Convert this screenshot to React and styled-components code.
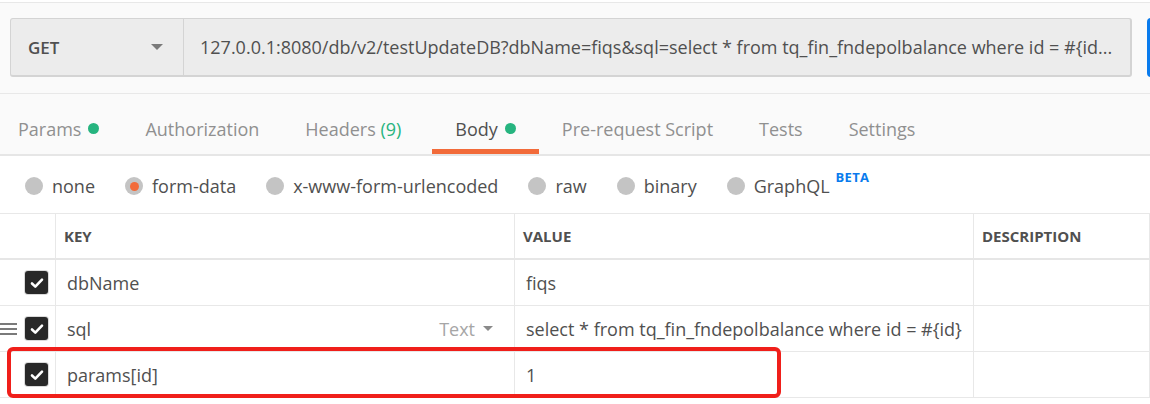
import React from "react";
import styled, { createGlobalStyle, css } from "styled-components";

const GlobalStyle = createGlobalStyle`
  html, body { margin: 0; padding: 0; background: #ffffff; }
  body { font-family: "Open Sans", "Noto Sans", sans-serif; color: #505050; }
  * { box-sizing: border-box; }
`;

const Page = styled.div`
  width: 1150px;
  height: 404px;
  overflow: hidden;
  background: #ffffff;
`;

const RequestSection = styled.div`
  display: flex;
  gap: 15px;
  margin-top: 2px;
  padding: 15px 0 16px 10px;
  background: #fafafa;
  border-top: 1px solid #e8e8e8;
  border-bottom: 1px solid #e8e8e8;
`;

const UrlBar = styled.div`
  flex: 0 0 1122px;
  height: 59px;
  display: flex;
  background: #ececec;
  border: solid #d4d4d4;
  border-width: 1px 2px 2px 1px;
  border-radius: 3px;
`;

const MethodSelect = styled.div`
  flex: 0 0 173px;
  display: flex;
  align-items: center;
  justify-content: space-between;
  padding: 0 20px 0 17px;
  border-right: 1px solid #d4d4d4;
  font-size: 17px;
  font-weight: 600;
  color: #505050;
`;

const Caret = styled.span`
  width: 0;
  height: 0;
  border-left: ${(p) => p.$size}px solid transparent;
  border-right: ${(p) => p.$size}px solid transparent;
  border-top: ${(p) => p.$size}px solid ${(p) => p.$color};
`;

const UrlText = styled.div`
  flex: 1;
  display: flex;
  align-items: center;
  padding-left: 16px;
  font-size: 18px;
  color: #505050;
  white-space: nowrap;
  overflow: hidden;
`;

const SendButton = styled.div`
  flex: 0 0 100px;
  height: 59px;
  background: #097bed;
  border-radius: 4px;
`;

const TabBar = styled.div`
  display: flex;
  padding-left: 18px;
  background: #fafafa;
  border-bottom: 2px solid #e6e6e6;
`;

const Tab = styled.div`
  display: flex;
  align-items: center;
  gap: 7px;
  height: 60px;
  padding: 14px 23px 0;
  margin-left: ${(p) => (p.$first ? "-23px" : "0")};
  font-size: 18px;
  color: ${(p) => (p.$active ? "#505050" : "#909090")};
  border-bottom: 5px solid ${(p) => (p.$active ? "#f26b3a" : "transparent")};
`;

const Dot = styled.span`
  width: 11px;
  height: 11px;
  border-radius: 50%;
  background: #26b47f;
`;

const Count = styled.span`
  margin-right: 8px;
  color: #26b47f;
`;

const BodyTypes = styled.div`
  display: flex;
  align-items: center;
  gap: 30px;
  height: 57px;
  padding: 3px 0 0 25px;
`;

const RadioItem = styled.label`
  display: flex;
  align-items: center;
  gap: 9px;
  font-size: 18px;
  color: #505050;
`;

const Radio = styled.span`
  width: 18px;
  height: 18px;
  border-radius: 50%;
  background: #c4c4c4;
  display: flex;
  align-items: center;
  justify-content: center;
  ${(p) =>
    p.$checked &&
    css`
      &::after {
        content: "";
        width: 9px;
        height: 9px;
        border-radius: 50%;
        background: #f26b3a;
      }
    `}
`;

const Beta = styled.sup`
  align-self: flex-start;
  margin: -6px 0 0 -3px;
  font-size: 13px;
  font-weight: 700;
  color: #097bed;
  letter-spacing: 0.3px;
`;

const TableWrap = styled.div`
  position: relative;
`;

const ParamTable = styled.div`
  display: grid;
  grid-template-columns: 56px 459px 459px 1fr;
  border-top: 1px solid #e8e8e8;
`;

const HeadCell = styled.div`
  height: 46px;
  display: flex;
  align-items: center;
  padding-left: 8px;
  font-size: 15px;
  font-weight: 700;
  color: #505050;
  border-right: 1px solid #e8e8e8;
  border-bottom: 2px solid #e6e6e6;
`;

const Cell = styled.div`
  height: 46px;
  display: flex;
  align-items: center;
  padding: 0 21px 0 11px;
  font-size: 18px;
  color: #505050;
  white-space: nowrap;
  border-right: 1px solid #e8e8e8;
  border-bottom: 1px solid #e8e8e8;
`;

const CheckCell = styled(Cell)`
  justify-content: flex-end;
  padding: 0 7px 0 0;
`;

const DragHandle = styled.span`
  margin-right: auto;
  width: 17px;
  height: 12px;
  display: flex;
  flex-direction: column;
  justify-content: space-between;
  & > i {
    display: block;
    height: 2px;
    background: #7a7a7a;
  }
`;

const CheckBox = styled.span`
  width: 23px;
  height: 23px;
  border-radius: 3px;
  background: #282828;
  box-shadow: 0 0 0 1px #dadada;
  display: flex;
  align-items: center;
  justify-content: center;
`;

const TypeSelect = styled.span`
  margin-left: auto;
  display: flex;
  align-items: center;
  gap: 8px;
  color: #a6a6a6;
`;

const Highlight = styled.div`
  position: absolute;
  left: 7px;
  top: 134px;
  width: 774px;
  height: 51px;
  border: 4px solid #f01f1a;
  border-radius: 6px;
  pointer-events: none;
`;

const Check = () => (
  <CheckBox>
    <svg width="16" height="16" viewBox="0 0 16 16">
      <path d="M3 8.5 L6.3 11.6 L13 4.6" fill="none" stroke="#fff" strokeWidth="2.6" strokeLinecap="round" strokeLinejoin="round" />
    </svg>
  </CheckBox>
);

const tabs = [
  { label: "Params", dot: true },
  { label: "Authorization" },
  { label: "Headers", count: "(9)" },
  { label: "Body", dot: true, active: true },
  { label: "Pre-request Script" },
  { label: "Tests" },
  { label: "Settings" },
];

const bodyTypes = [
  { label: "none" },
  { label: "form-data", checked: true },
  { label: "x-www-form-urlencoded" },
  { label: "raw" },
  { label: "binary" },
  { label: "GraphQL", beta: true },
];

const rows = [
  { key: "dbName", value: "fiqs" },
  { key: "sql", value: "select * from tq_fin_fndepolbalance where id = #{id}", hover: true },
  { key: "params[id]", value: "1" },
];

export default function App() {
  return (
    <Page>
      <GlobalStyle />
      <RequestSection>
        <UrlBar>
          <MethodSelect>
            GET
            <Caret $size={6} $color="#7a7a7a" />
          </MethodSelect>
          <UrlText>
            127.0.0.1:8080/db/v2/testUpdateDB?dbName=fiqs&amp;sql=select * from tq_fin_fndepolbalance where id = #{"{"}id...
          </UrlText>
        </UrlBar>
        <SendButton />
      </RequestSection>

      <TabBar>
        {tabs.map((t, i) => (
          <Tab key={t.label} $active={t.active} $first={i === 0}>
            <span>
              {t.label}
              {t.count && <Count>{" " + t.count}</Count>}
            </span>
            {t.dot && <Dot />}
          </Tab>
        ))}
      </TabBar>

      <BodyTypes>
        {bodyTypes.map((b) => (
          <RadioItem key={b.label}>
            <Radio $checked={b.checked} />
            {b.label}
            {b.beta && <Beta>BETA</Beta>}
          </RadioItem>
        ))}
      </BodyTypes>

      <TableWrap>
        <ParamTable>
          <HeadCell />
          <HeadCell>KEY</HeadCell>
          <HeadCell>VALUE</HeadCell>
          <HeadCell>DESCRIPTION</HeadCell>
          {rows.map((r) => (
            <React.Fragment key={r.key}>
              <CheckCell>
                {r.hover && (
                  <DragHandle>
                    <i />
                    <i />
                    <i />
                  </DragHandle>
                )}
                <Check />
              </CheckCell>
              <Cell>
                {r.key}
                {r.hover && (
                  <TypeSelect>
                    Text
                    <Caret $size={5} $color="#8a8a8a" />
                  </TypeSelect>
                )}
              </Cell>
              <Cell>{r.value}</Cell>
              <Cell />
            </React.Fragment>
          ))}
        </ParamTable>
        <Highlight />
      </TableWrap>
    </Page>
  );
}
